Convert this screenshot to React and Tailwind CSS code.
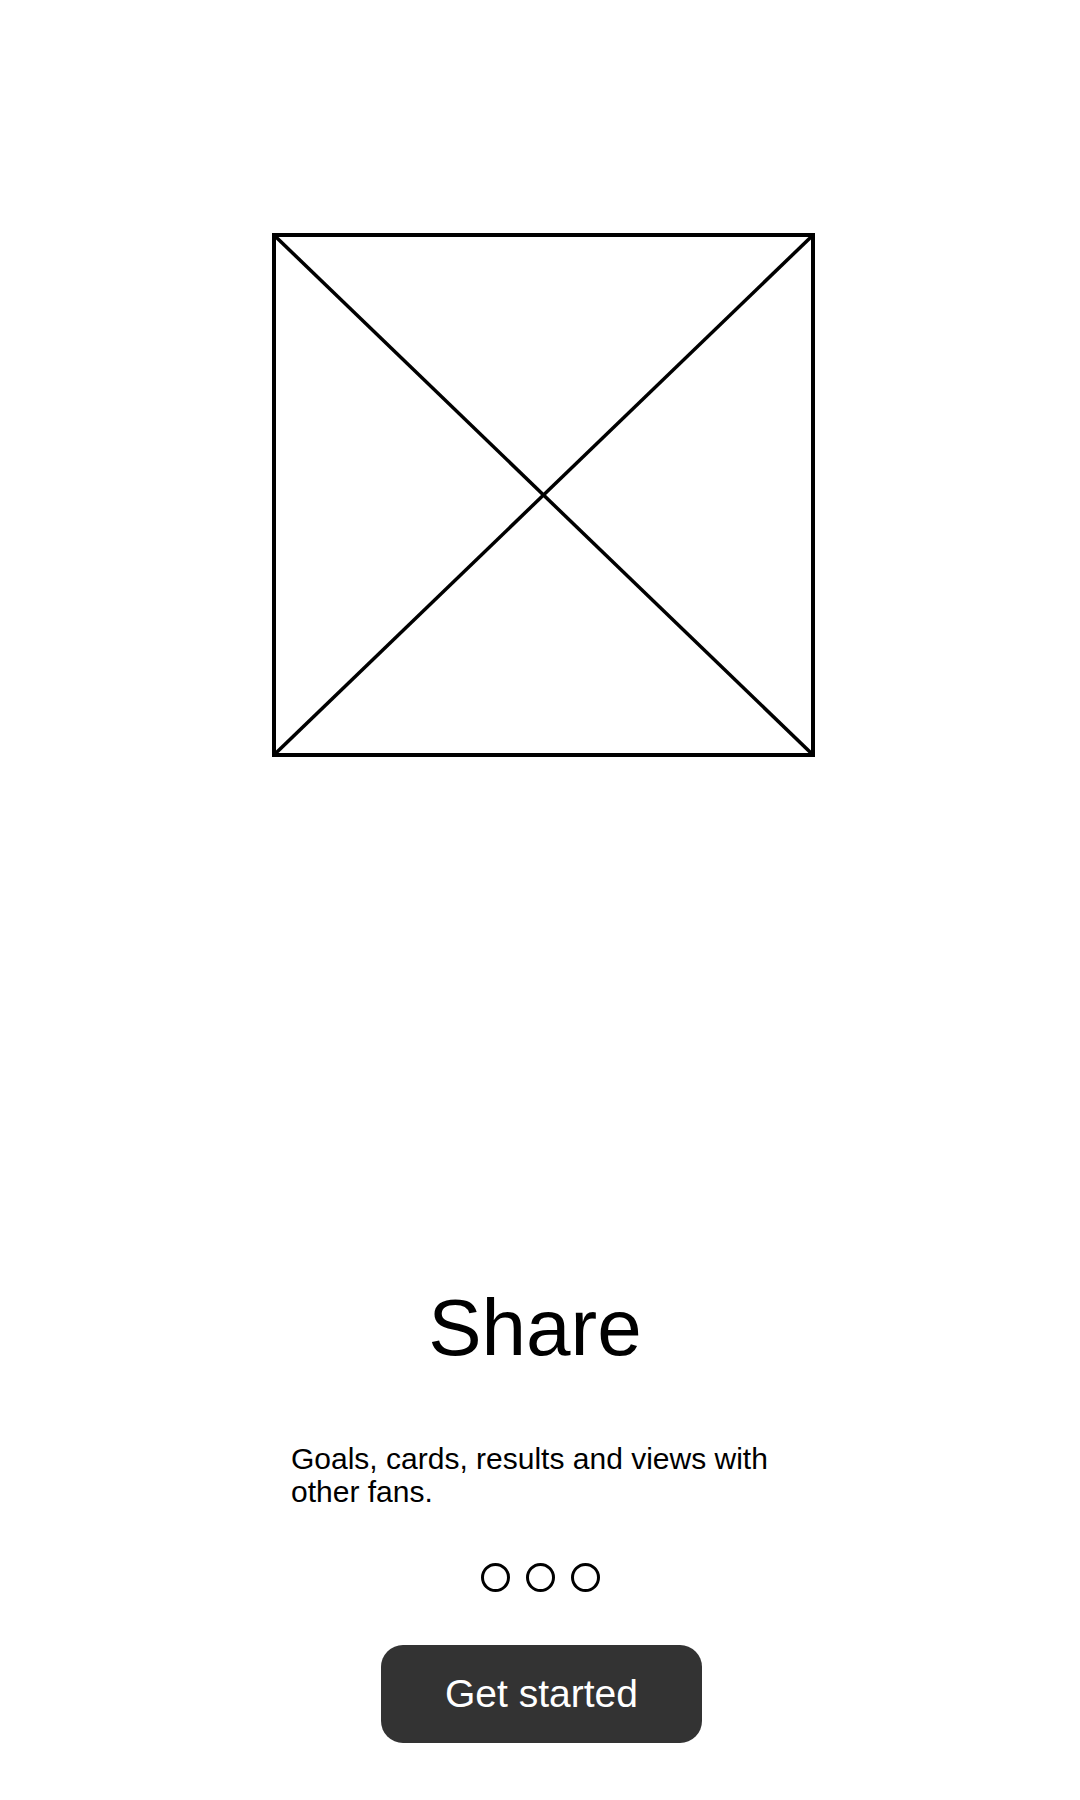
export default function App() {
  return (
    <div className="w-[1080px] min-h-[1800px] bg-white flex flex-col items-center text-black"
         style={{fontFamily: '"Liberation Sans", Arial, sans-serif'}}>
      {/* image placeholder */}
      <div className="mt-[233px] ml-[6px] w-[543px] h-[524px] border-[4px] border-black relative">
        <svg className="absolute inset-0 w-full h-full" viewBox="0 0 535 516" preserveAspectRatio="none">
          <line x1="0" y1="0" x2="535" y2="516" stroke="black" strokeWidth="3.5" />
          <line x1="535" y1="0" x2="0" y2="516" stroke="black" strokeWidth="3.5" />
        </svg>
      </div>

      <h1 className="mt-[531px] text-[80px] leading-none -ml-[10px]">Share</h1>

      <p className="mt-[74px] ml-[2px] w-[500px] text-[30px] leading-[33px]">
        Goals, cards, results and views with other fans.
      </p>

      <div className="mt-[55px] flex gap-[16px]">
        <span className="w-[29px] h-[29px] rounded-full border-[3px] border-black" />
        <span className="w-[29px] h-[29px] rounded-full border-[3px] border-black" />
        <span className="w-[29px] h-[29px] rounded-full border-[3px] border-black" />
      </div>

      <button className="mt-[53px] ml-[3px] w-[321px] h-[98px] rounded-[22px] bg-[#333333] text-white text-[39px]">
        Get started
      </button>
    </div>
  );
}
